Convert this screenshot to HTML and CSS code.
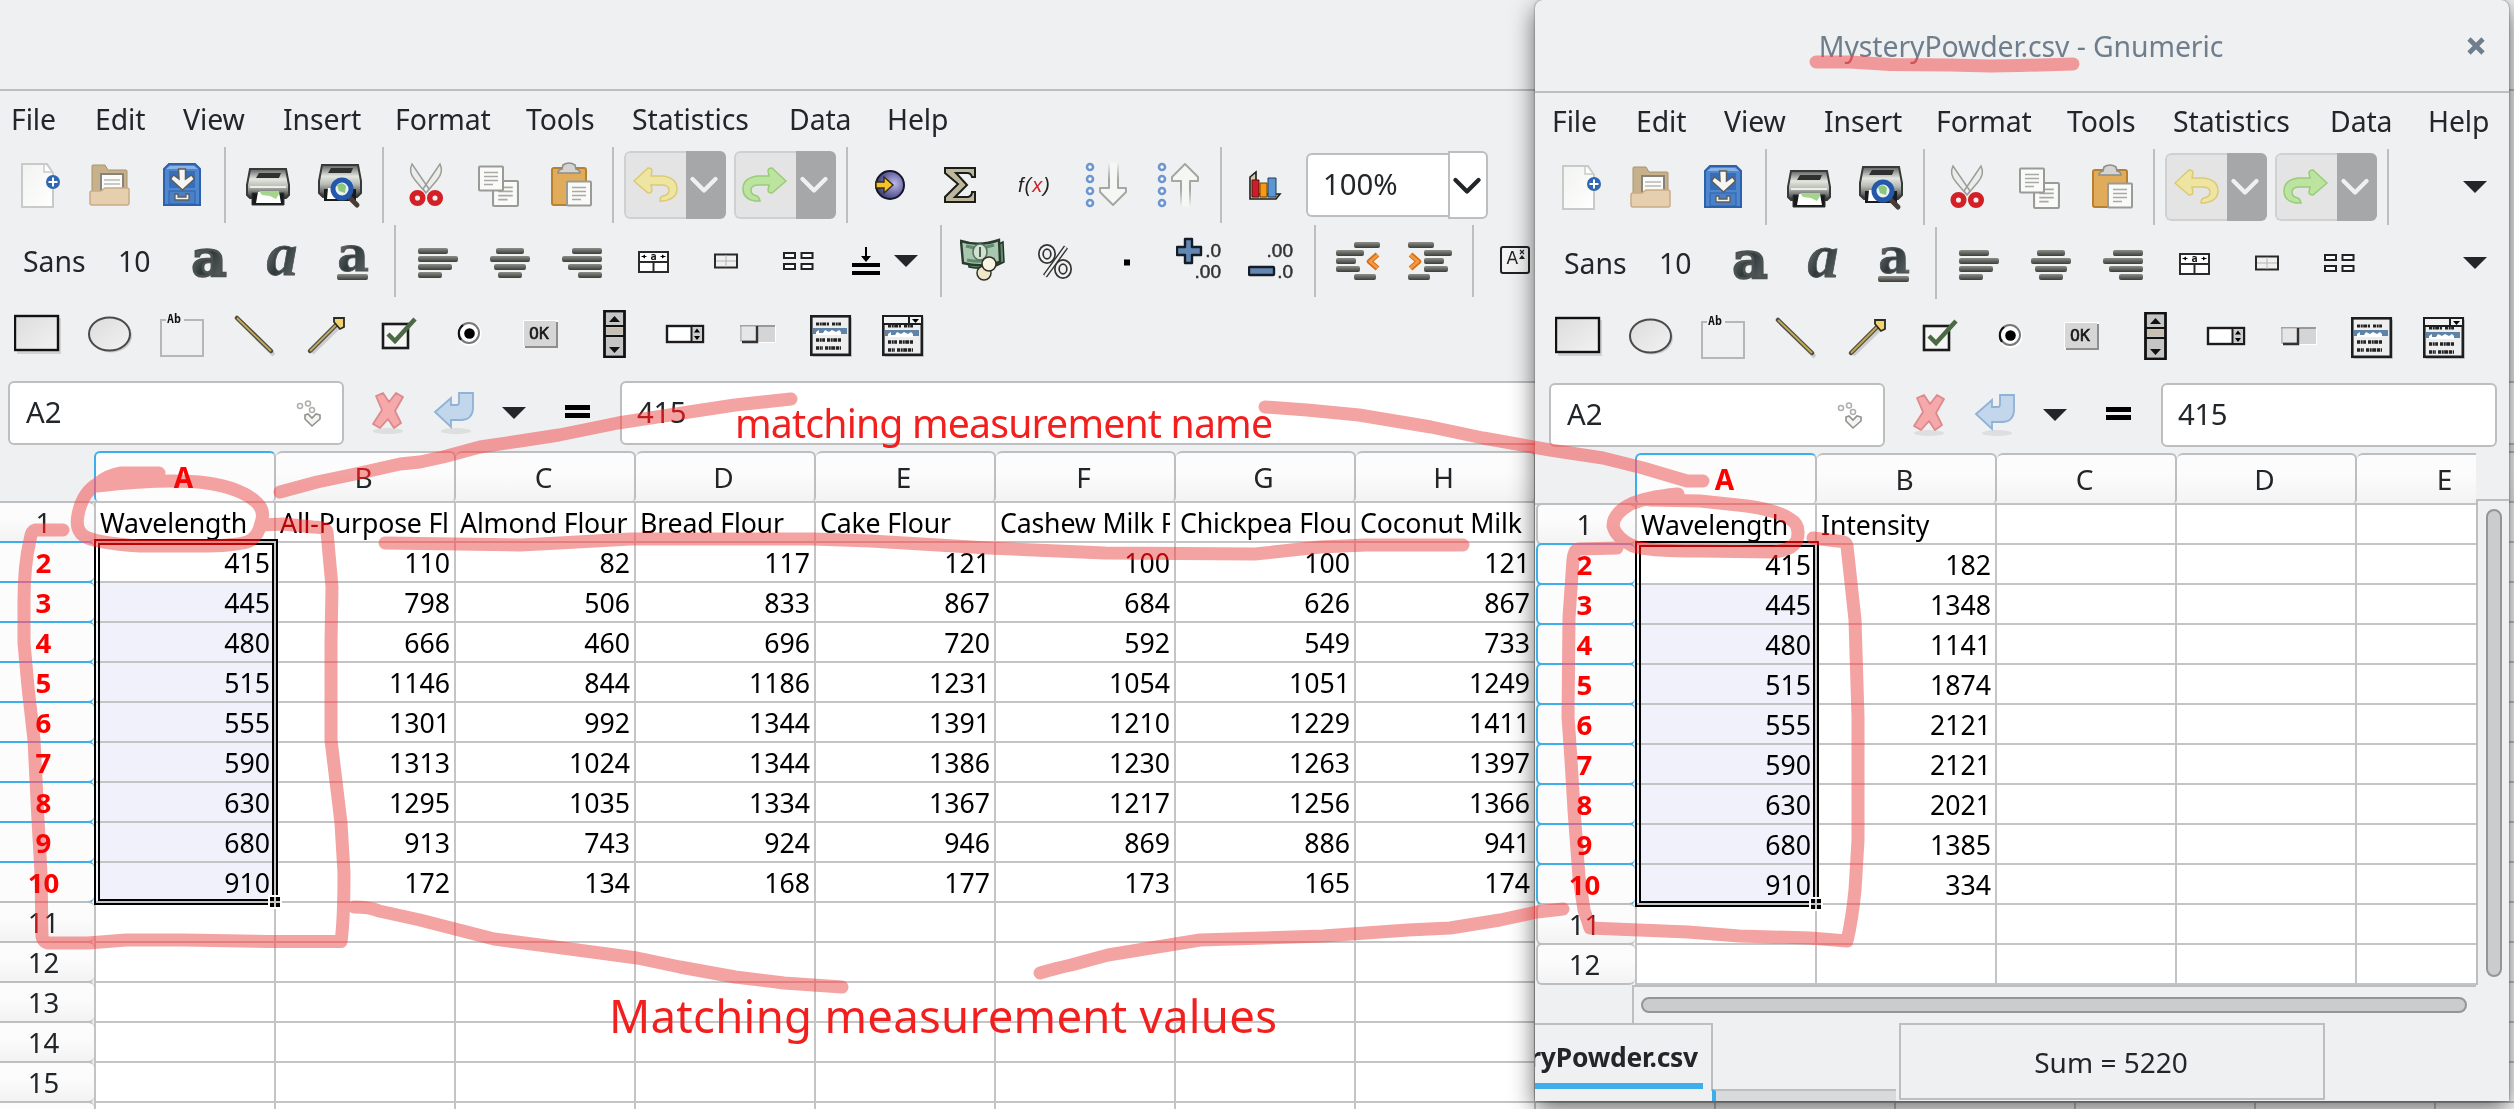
FILE: index.html
```html
<!DOCTYPE html>
<html lang="en">
<head>
<meta charset="utf-8">
<title>MysteryPowder.csv - Gnumeric</title>
<link rel="stylesheet" href="styles.css">
</head>
<body>
<svg class="defs" width="0" height="0" aria-hidden="true">
<defs>
<linearGradient id="bar" x1="0" y1="0" x2="0" y2="1"><stop offset="0" stop-color="#8d8e89"/><stop offset="1" stop-color="#3b3d39"/></linearGradient>
<linearGradient id="ink" x1="0" y1="0" x2="1" y2="1"><stop offset="0" stop-color="#909694"/><stop offset=".5" stop-color="#30393b"/><stop offset="1" stop-color="#6c7471"/></linearGradient>
<linearGradient id="paper" x1="0" y1="0" x2="1" y2="1"><stop offset="0" stop-color="#f2f2f1"/><stop offset="1" stop-color="#fff"/></linearGradient>
<linearGradient id="shade" x1="0" y1="0" x2="1" y2="1"><stop offset="0" stop-color="#dcdcdc"/><stop offset="1" stop-color="#f2f2f2"/></linearGradient>
<linearGradient id="metal" x1="0" y1="0" x2="0" y2="1"><stop offset="0" stop-color="#5d6260"/><stop offset=".35" stop-color="#e4e6e0"/><stop offset=".6" stop-color="#b9bbb6"/><stop offset="1" stop-color="#2d302f"/></linearGradient>
<radialGradient id="ball" cx=".65" cy=".45" r=".7"><stop offset="0" stop-color="#b9b9ea"/><stop offset="1" stop-color="#2c2c6c"/></radialGradient>
<linearGradient id="fadeup" x1="0" y1="0" x2="0" y2="1"><stop offset="0" stop-color="#a5a7a2" stop-opacity="0"/><stop offset=".4" stop-color="#a5a7a2"/></linearGradient>
<linearGradient id="fadedown" x1="0" y1="0" x2="0" y2="1"><stop offset=".6" stop-color="#a5a7a2"/><stop offset="1" stop-color="#a5a7a2" stop-opacity="0"/></linearGradient>

<symbol id="new" viewBox="0 0 48 48"><path d="M8 3H33L39 12V46H8z" fill="url(#paper)" stroke="#c9cac7" stroke-width="2"/><path d="M30 4v7h8" fill="#fff" stroke="#c9cac7" stroke-width="1.5"/><circle cx="39" cy="21" r="7" fill="#2f67b1"/><path d="M39 16.5v9M34.5 21h9" stroke="#fff" stroke-width="2"/></symbol>
<symbol id="open" viewBox="0 0 48 48"><path d="M6 42V5q0-1 1-1h12l3 5h18q1 0 1 1v30z" fill="#c6b18c" stroke="#a8946f"/><rect x="15" y="13" width="22" height="20" fill="#fbfbfa" stroke="#85837a" stroke-width="2"/><path d="M18 19h16M18 23h16" stroke="#b9b9b6" stroke-width="1.6"/><path d="M4 32q0-2 2-2h9l4-3h22q2 0 2 2v13q0 2-2 2H6q-2 0-2-2z" fill="#e6cfae" stroke="#c9ac86" stroke-width="1.5"/></symbol>
<symbol id="save" viewBox="0 0 48 48"><path d="M6 8l5-5h26l5 5v36H6z" fill="#4f86ce" stroke="#2c62ad" stroke-width="2"/><path d="M8 8l4-3h24l4 3z" fill="#8ab2e6"/><rect x="11" y="10" width="26" height="17" fill="#356fbc"/><rect x="11" y="30" width="26" height="13" fill="#4a80c8" stroke="#2c62ad"/><path d="M20.500 8h7v10l6-4 3 4-12 11-12-11 3-4 5.500 4z" fill="#f6f6f4" stroke="#5c5e5a" stroke-width="1.500"/><path d="M17 33v6h14v-6h-3v3h-8v-3z" fill="#f4f4f2" stroke="#5c5e5a" stroke-width="1.300"/></symbol>
<symbol id="print" viewBox="0 0 48 48"><path d="M6 8h36l3 16v10l-3 3H6l-3-3V24z" fill="url(#metal)" stroke="#363a39" stroke-width="2"/><path d="M15 12h22l-2 5H12z" fill="#2e3130"/><path d="M8 32h32v12H8z" fill="#191b1b" stroke="#333"/><path d="M6 26h36" stroke="#eceee9" stroke-width="2"/><path d="M14 31h21l2 11H12z" fill="#fff"/><path d="M15 30h20v3l-3 5-6-3-8-1z" fill="#a5d48c"/></symbol>
<symbol id="preview" viewBox="0 0 48 48"><path d="M6 4h36l3 16v12l-4 4H7l-4-4V20z" fill="url(#metal)" stroke="#363a39" stroke-width="2"/><path d="M15 7h22l-2 5H12z" fill="#2e3130"/><path d="M8 28h32v12H8z" fill="#191b1b"/><path d="M12 27h10v11H11z" fill="#fff"/><path d="M33 36l8 8" stroke="#463d36" stroke-width="5" stroke-linecap="round"/><circle cx="26" cy="28" r="9" fill="#e8f0f4" stroke="#2458aa" stroke-width="5"/><path d="M21 24q5-4 9 1l-1 7-6-2z" fill="#8cc67a"/></symbol>
<symbol id="cut" viewBox="0 0 48 48"><path d="M10 3q-4 8 3 16l11 13 3-4zM38 3q4 8-3 16L24 32l-3-4z" fill="#ecedea" stroke="#9b9d98" stroke-width="1.500"/><circle cx="15.500" cy="37" r="5.300" fill="#eee" stroke="#d32027" stroke-width="5.500"/><circle cx="33" cy="37" r="5.300" fill="#eee" stroke="#d32027" stroke-width="5.500"/></symbol>
<symbol id="sheet" viewBox="0 0 26 26"><rect x="1" y="1" width="24" height="24" rx="1" fill="#fafaf9" stroke="#999b96" stroke-width="2"/><path d="M6 7h14M6 11h14M6 15h14M6 19h9" stroke="#a9aaa6" stroke-width="1.700"/></symbol>
<symbol id="copy" viewBox="0 0 48 48"><use href="#sheet" x="18" y="19" width="27" height="27"/><use href="#sheet" x="4" y="4" width="26" height="27"/></symbol>
<symbol id="paste" viewBox="0 0 48 48"><rect x="6" y="7" width="34" height="37" rx="2" fill="#e0ab5b" stroke="#b9802f" stroke-width="2"/><path d="M17 4q6-4 12 0l1 4q4 1 4 4H12q0-3 4-4z" fill="#d4d5d2" stroke="#8d8f8b" stroke-width="1.600"/><use href="#sheet" x="20" y="19" width="26" height="27"/></symbol>
<symbol id="undo" viewBox="0 0 48 48"><path d="M3 20L17 7q4 0 4 3l-1 5h12q14 2 14 13 0 10-14 12h-3q0-4 3-5 6-1 6-6t-8-5H20l1 5q0 3-4 3z" fill="#efe5a3" stroke="#dcca72" stroke-width="1.500"/></symbol>
<symbol id="redo" viewBox="0 0 48 48"><path d="M45 20L31 7q-4 0-4 3l1 5H16Q2 17 2 28q0 10 12 12h5q-1-4-3-5-6-1-6-6t8-5h10l-1 5q0 3 4 3z" fill="#bde3a0" stroke="#97cd77" stroke-width="1.500"/></symbol>
<symbol id="globe" viewBox="0 0 48 48"><circle cx="24" cy="24" r="14" fill="url(#ball)" stroke="#15152c" stroke-width="2"/><path d="M10 21h8v-5l9 8-9 8v-5h-8z" fill="#f3c52a" stroke="#3a2c05" stroke-width="1.400"/></symbol>
<symbol id="sum" viewBox="0 0 48 48"><path d="M7 7h30v9h-3q-1-4-5-4H18l11 12-12 12h13q4-1 4-5h3v10H7v-5l13-13L7 12z" fill="#bdb89b" stroke="#1c1c18" stroke-width="2"/></symbol>
<symbol id="fx" viewBox="0 0 48 48"><text x="8" y="31" class="fx">f(<tspan fill="#d3202a">x</tspan>)</text></symbol>
<symbol id="dots" viewBox="0 0 48 48"><g fill="#fff" stroke="#6d96cf" stroke-width="2.600"><circle cx="8" cy="6" r="3"/><circle cx="8" cy="18" r="3"/><circle cx="8" cy="30" r="3"/><circle cx="8" cy="42" r="3"/></g></symbol>
<symbol id="sortdown" viewBox="0 0 48 48"><use href="#dots"/><path d="M27 1h9v26h8v4L31 44 18 31v-4h9z" fill="#f6f6f4" stroke="url(#fadeup)" stroke-width="2" stroke-linejoin="round"/></symbol>
<symbol id="sortup" viewBox="0 0 48 48"><use href="#dots"/><path d="M27 46h9V20h8v-4L31 3 18 16v4h9z" fill="#f6f6f4" stroke="url(#fadedown)" stroke-width="2" stroke-linejoin="round"/></symbol>
<symbol id="chart" viewBox="0 0 48 48"><path d="M10 38V16l6-5v22h24l-4 5z" fill="#cfcaaa" stroke="#1f1f1c" stroke-width="1.600"/><path d="M12 19h7v17h-7z" fill="#cb1f27" stroke="#5a1013"/><path d="M20 22h7v14h-7z" fill="#f79a12" stroke="#66420a"/><path d="M28 17h8v19h-8z" fill="#5d97d2" stroke="#1c3c5e"/></symbol>
<symbol id="bold" viewBox="0 0 48 48"><text x="25" y="38.500" textLength="35" lengthAdjust="spacingAndGlyphs" class="glyph heavy" font-size="51">a</text></symbol>
<symbol id="italic" viewBox="0 0 48 48"><text x="26" y="38" class="glyph slant">a</text></symbol>
<symbol id="underline" viewBox="0 0 48 48"><text x="25" y="34" class="glyph" font-size="49">a</text><rect x="9" y="37" width="31" height="6" rx="2" fill="url(#bar)"/></symbol>
<symbol id="left" viewBox="0 0 48 48"><g fill="url(#bar)"><rect x="4" y="11" width="30" height="6" rx="2"/><rect x="4" y="19" width="40" height="6" rx="2"/><rect x="4" y="27" width="34" height="6" rx="2"/><rect x="4" y="35" width="24" height="6" rx="2"/></g></symbol>
<symbol id="center" viewBox="0 0 48 48"><g fill="url(#bar)"><rect x="10" y="11" width="28" height="6" rx="2"/><rect x="4" y="19" width="40" height="6" rx="2"/><rect x="8" y="27" width="32" height="6" rx="2"/><rect x="12" y="35" width="24" height="6" rx="2"/></g></symbol>
<symbol id="right" viewBox="0 0 48 48"><g fill="url(#bar)"><rect x="14" y="11" width="30" height="6" rx="2"/><rect x="4" y="19" width="40" height="6" rx="2"/><rect x="10" y="27" width="34" height="6" rx="2"/><rect x="20" y="35" width="24" height="6" rx="2"/></g></symbol>
<symbol id="merge" viewBox="0 0 48 48"><path d="M9 15h29v20H9zM9 25h29M23.500 25v10" fill="#fdfdfd" stroke="#2a2a2a" stroke-width="2"/><path d="M11.500 19.500h5M30.500 19.500h5" stroke="#111" stroke-width="1.200"/><path d="M15 17.500l-3 2 3 2zM32 17.500l3 2-3 2z"/><text x="20.500" y="23" font-size="10" class="tiny">a</text></symbol>
<symbol id="split" viewBox="0 0 48 48"><rect x="13" y="17.500" width="22" height="13" fill="#f0f0f0" stroke="#2a2a2a" stroke-width="2"/><path d="M24 18v12M14 24h20" stroke="#b5b5b5"/></symbol>
<symbol id="quad" viewBox="0 0 48 48"><path d="M10 16h11v5H10zM27.500 16h11v5h-11zM10 27h11v5H10zM27.500 27h11v5h-11z" fill="#fcfcfc" stroke="#222" stroke-width="2"/></symbol>
<symbol id="valign" viewBox="0 0 48 48"><path d="M10 26h28v4H10zM10 34h28v4H10zM23 10h2v9h4l-5 6-5-6h4z"/></symbol>
<symbol id="money" viewBox="0 0 48 48"><path d="M7 9q17 7 36-4l1 20q-16 9-35 5z" fill="#5d8f6c" stroke="#26332a" stroke-width="1.500"/><path d="M1 4q18 6 38-1l1 22q-18 6-37 1z" fill="#a9c7b0" stroke="#2a3a2f" stroke-width="2.400"/><path d="M6 9q14 4 28-1M7 23q14 3 28-1" fill="none" stroke="#5f8a6b" stroke-width="3"/><ellipse cx="20" cy="15" rx="7" ry="8" fill="#d3e0d4" stroke="#56755f" stroke-width="1.600"/><path d="M20 10v10" stroke="#48664f" stroke-width="2"/><circle cx="24" cy="36" r="7" fill="#eee8cb" stroke="#2f2e28" stroke-width="1.500"/><circle cx="29" cy="27" r="7" fill="#f7f4e2" stroke="#2f2e28" stroke-width="1.500"/></symbol>
<symbol id="percent" viewBox="0 0 48 48"><g fill="none" stroke="#333" stroke-width="6"><ellipse cx="15" cy="17" rx="6" ry="7"/><ellipse cx="31" cy="32" rx="6" ry="7"/><path d="M34 10L13 39" stroke-width="5"/></g><g fill="none" stroke="#f2f2f2" stroke-width="2.600"><ellipse cx="15" cy="17" rx="6" ry="7"/><ellipse cx="31" cy="32" rx="6" ry="7"/><path d="M34 10L13 39" stroke-width="2.200"/></g></symbol>
<symbol id="dot" viewBox="0 0 48 48"><rect x="20" y="22.500" width="6" height="6" fill="#000"/></symbol>
<symbol id="moredec" viewBox="0 0 48 48"><path d="M9 2h7v8h9v8h-9v8H9v-8H1v-8h8z" fill="#6287b5" stroke="#161c26" stroke-width="2.400" stroke-linejoin="round"/><text x="45" y="20" class="dec">.0</text><text x="45" y="41" class="dec">.00</text></symbol>
<symbol id="lessdec" viewBox="0 0 48 48"><text x="45" y="20" class="dec">.00</text><text x="45" y="41" class="dec">.0</text><rect x="1" y="30" width="25" height="8" rx="1" fill="#6287b5" stroke="#161c26" stroke-width="2.400"/></symbol>
<symbol id="outdent" viewBox="0 0 48 48"><g fill="url(#bar)"><rect x="20" y="5" width="26" height="6" rx="2"/><rect x="2" y="13" width="28" height="6" rx="2"/><rect x="2" y="21" width="20" height="6" rx="2"/><rect x="2" y="29" width="24" height="6" rx="2"/><rect x="20" y="37" width="22" height="6" rx="2"/></g><path d="M43.500 17.500L35.500 24.500l8 7" fill="none" stroke="#d96f12" stroke-width="5.500" stroke-linejoin="round"/><path d="M43.500 18L36 24.500l7.500 6.500" fill="none" stroke="#f19a47" stroke-width="2.500"/></symbol>
<symbol id="indent" viewBox="0 0 48 48"><g fill="url(#bar)"><rect x="2" y="5" width="26" height="6" rx="2"/><rect x="18" y="13" width="28" height="6" rx="2"/><rect x="18" y="21" width="20" height="6" rx="2"/><rect x="18" y="29" width="24" height="6" rx="2"/><rect x="2" y="37" width="22" height="6" rx="2"/></g><path d="M4.500 17.500l8 7-8 7" fill="none" stroke="#d96f12" stroke-width="5.500" stroke-linejoin="round"/><path d="M4.500 18l7.500 6.500L4.500 31" fill="none" stroke="#f19a47" stroke-width="2.500"/></symbol>
<symbol id="super" viewBox="0 0 48 48"><rect x="9" y="10" width="28" height="26" rx="2" fill="#f4f4f4" stroke="#222" stroke-width="2"/><text x="14.500" y="27" font-size="17" class="cap">A</text><path d="M28 13l4 4M32 13l-4 4" stroke="#222" stroke-width="1.200"/><path d="M27 22l3-4 3 4z" fill="#222"/></symbol>
<symbol id="rect" viewBox="0 0 48 48"><rect x="3" y="8" width="44" height="36" fill="#000" opacity=".12"/><rect x="1" y="6" width="43" height="34" fill="url(#shade)" stroke="#111" stroke-width="2.400"/></symbol>
<symbol id="oval" viewBox="0 0 48 48"><ellipse cx="25" cy="26" rx="21" ry="16.500" fill="#000" opacity=".15"/><ellipse cx="23.500" cy="24" rx="20.500" ry="16.500" fill="url(#shade)" stroke="#4a4a4a" stroke-width="2"/></symbol>
<symbol id="frame" viewBox="0 0 48 48"><path d="M8 10H3v36h42V10H26" fill="none" stroke="#b6b7b6" stroke-width="2"/><text x="9" y="13" class="ab">Ab</text></symbol>
<symbol id="line" viewBox="0 0 48 48"><path d="M10 11l34 34" stroke="#000" stroke-opacity=".15" stroke-width="4"/><path d="M7 8l34 33" stroke="#4e4c42" stroke-width="4.500" stroke-linecap="round"/><path d="M7 8l34 33" stroke="#c3ac58" stroke-width="1.800"/></symbol>
<symbol id="arrow" viewBox="0 0 48 48"><path d="M10 43l27-26" stroke="#000" stroke-opacity=".15" stroke-width="4"/><path d="M8 41l28-28" stroke="#4e4c42" stroke-width="4.500" stroke-linecap="round"/><path d="M8 41l28-28" stroke="#c3ac58" stroke-width="1.800"/><path d="M32 8h10v9l-4 2-6-7z" fill="#f0d470" stroke="#2d2a1e" stroke-width="1.800"/></symbol>
<symbol id="check" viewBox="0 0 48 48"><rect x="9" y="14" width="25" height="24" fill="#f6f6f6" stroke="#1b1b1b" stroke-width="2.600"/><path d="M14 24l7 7L41 9" fill="none" stroke="#4b6a44" stroke-width="4.500"/></symbol>
<symbol id="radio" viewBox="0 0 48 48"><circle cx="23.500" cy="24" r="12" fill="#fff"/><circle cx="23" cy="23" r="10" fill="#fff" stroke="#777" stroke-width="2"/><path d="M15 30a10.500 10.500 0 0 1 2-15" fill="none" stroke="#111" stroke-width="2"/><circle cx="23.500" cy="23.500" r="5.300"/></symbol>
<symbol id="ok" viewBox="0 0 48 48"><path d="M5 10h35v27H5z" fill="#fff"/><path d="M7 12h33v26H7z" fill="#8e8e8e"/><path d="M6 11h32v25H6z" fill="#d6d6d6"/><text x="11" y="29" class="ok">OK</text></symbol>
<symbol id="scroll" viewBox="0 0 48 48"><rect x="14.500" y="1" width="20" height="46" fill="#c5c5c5" stroke="#111" stroke-width="2.800"/><path d="M14 16h21M14 26h21" stroke="#111" stroke-width="2"/><rect x="16.500" y="18" width="16" height="6" fill="#c6bfb2"/><path d="M19 12l5.500-6 5.500 6zM19 37l5.500 6 5.500-6z" fill="#111"/></symbol>
<symbol id="spin" viewBox="0 0 48 48"><rect x="5" y="16" width="36" height="16" fill="#fff" stroke="#1b1b1b" stroke-width="2.400"/><rect x="30" y="17" width="10" height="14" fill="#ccc"/><path d="M29.500 16v16" stroke="#1b1b1b" stroke-width="2"/><path d="M32 22.500l3-4 3 4zM32 26l3 4 3-4z"/></symbol>
<symbol id="slider" viewBox="0 0 48 48"><path d="M6 16h36v17H6z" fill="#fff"/><path d="M6 15h35v17H6z" fill="#d5d5d5"/><path d="M6 16h35" stroke="#999" stroke-width="2"/><rect x="7" y="16" width="16" height="15" fill="#e6e6e6" stroke="#aaa"/><path d="M8 32h15V16" fill="none" stroke="#333" stroke-width="2.400"/></symbol>
<symbol id="lines" viewBox="0 0 48 48"><path d="M7 18h34v6H7z" fill="#5f83a6"/><path d="M10 22l3-2v3h4l2-3 4 2 3-2 4 2 3-2 2 2v3H10z" fill="#fff"/><g fill="none" stroke="#222" stroke-width="3.600" stroke-dasharray="3 .7 2 .5 4 .8"><path d="M10 14h13M26 14h9" stroke-width="2.800"/><path d="M10 30h9M21 30h14"/><path d="M10 38h7M19 38h16"/></g></symbol>
<symbol id="list" viewBox="0 0 48 48"><path d="M7 8h39v39H7z" opacity=".15"/><rect x="5.300" y="6.300" width="38.500" height="38.500" fill="#eee" stroke="#1b1f20" stroke-width="2.600"/><use href="#lines"/></symbol>
<symbol id="combo" viewBox="0 0 48 48"><path d="M7 8h39v39H7z" opacity=".15"/><rect x="5.300" y="6.300" width="38.500" height="38.500" fill="#eee" stroke="#1b1f20" stroke-width="2.600"/><use href="#lines" y="2"/><path d="M6 7h37v7H6z" fill="#f3f3f3"/><path d="M5 14h39M31 6v8" stroke="#1b1f20" stroke-width="2"/><path d="M34 9h7l-3.500 4z"/></symbol>
<symbol id="goto" viewBox="0 0 48 48"><g fill="#fff" stroke="#b0b0ae" stroke-width="1.600"><circle cx="13" cy="17" r="2.500"/><circle cx="21" cy="14.500" r="2.500"/><circle cx="25" cy="21" r="2.500"/></g><path d="M18 26l3-1 4 4 4-4 4 1v4l-8 7-7-7z" fill="#f4f4f3" stroke="#90928e" stroke-width="1.600"/></symbol>
<symbol id="cancel" viewBox="0 0 48 48"><ellipse cx="24" cy="43" rx="15" ry="3" fill="#ccc" opacity=".5"/><path d="M12 8l7-3 6 9 7-9 7 4-8 14 6 12-7 5-6-9-8 9-7-4 9-14z" fill="#f5a9ab" stroke="#dd8a8c" stroke-width="1.800" stroke-linejoin="round"/></symbol>
<symbol id="enter" viewBox="0 0 48 48"><ellipse cx="26" cy="43" rx="15" ry="3" fill="#ccc" opacity=".5"/><path d="M5 24L21 10v7h6q2 0 2-3V5h14v16q-1 11-12 11H21v7z" fill="#c3d7ec" stroke="#8fb2d6" stroke-width="1.800"/></symbol>
<symbol id="equal" viewBox="0 0 48 48"><path d="M12 17h25v5H12zM12 25h25v5H12z"/></symbol>
<symbol id="caret" viewBox="0 0 24 12"><path d="M0 0h24L12 12z" fill="#232629"/></symbol>
<symbol id="chevron" viewBox="0 0 28 18"><path d="M2.500 3L14 14.500 25.500 3" fill="none" stroke="currentColor" stroke-width="4.200" stroke-linecap="round" stroke-linejoin="round"/></symbol>
<symbol id="close" viewBox="0 0 18 18"><path d="M2 2l14 14M16 2L2 16" stroke="#6f7e8c" stroke-width="4.600"/></symbol>

<g id="strokes" fill="none" stroke-width="13" stroke-linecap="round" stroke-linejoin="round">
<path d="M1816 62L1850 62 1890 64.500 1950 65 1990 66 2020 65.500 2073 64"/>
<path d="M159 473H121Q108 475 97 484 82 493 78 515 75 530 84 536 95 543 140 546H200Q232 546 247 542 258 538 261 523 266 510 255 501 240 488 207 483 167 478 97 486"/>
<path d="M63 530H35Q31 531 30 540 24 565 24 600V643L28 687 34 740 38 820 41 873 42 936Q43 943 50 943H88L126 940H184L268 941.500H341Q344 920 344 873L341 823 331 740V643L332 587 327 532Q326 527 313 527L283 524 262 525"/>
<path d="M280 492L317 482 360 473 400 464 420 462 443 457 480 447 520 441 559 435 618 423 689 412 735 405 791 399"/>
<path d="M1265 407L1307 410 1359 415 1431 427 1483 438 1550 450 1603 458 1643 468 1687 481H1703"/>
<path d="M385 543L520 545 559 543 631 539H813L871 541 988 548 1105 553 1255 554 1320 547 1366 545H1463"/>
<path d="M1678 494Q1645 497 1629 505 1613 514 1613 526 1616 538 1633 546 1645 551 1700 551L1773 552Q1793 550 1797 540 1801 525 1790 519 1780 511 1747 506L1700 501 1650 500"/>
<path d="M1617 548L1578 549Q1574 550 1573 560L1569 617 1568 717 1571 760 1574 810 1579 877 1584 910 1590 928 1688 932 1739 936 1810 938 1847 941Q1852 920 1855 890L1858 840V717L1855 620 1847 546Q1846 541 1837 541L1813 538"/>
<path d="M354 907Q370 907 379 911L420 920 494 939 555 947 600 953 637 958 680 967 735 977 784 983 842 987"/>
<path d="M1040 973Q1057 968 1071 965L1108 955 1200 940 1323 936 1408 930 1450 928 1500 920 1537 912 1563 909"/>
</g>
</defs>
</svg>

<div class="desktop">
  <section class="window back" id="samples"></section>
  <section class="window front" id="mystery"></section>
  <svg class="ink lighten" width="2514" height="1109"><use href="#strokes"/></svg>
  <svg class="ink tint" width="2514" height="1109"><use href="#strokes"/></svg>
  <svg class="notes" width="2514" height="1109">
    <text x="735" y="438" font-size="39.200" textLength="538">matching measurement name</text>
    <text x="609" y="1033" font-size="45.500" textLength="668">Matching measurement values</text>
  </svg>
</div>
<script src="script.js"></script>
</body>
</html>
```
FILE: styles.css
```css
* { box-sizing: border-box; }
body { margin: 0; font-family: "Noto Sans", "Open Sans", sans-serif; font-size: 29.33px; color: #232629; }
.defs { display: block; position: absolute; }
.desktop { position: relative; width: 2514px; height: 1109px; overflow: hidden; background: #eff0f1; }
.window { position: absolute; display: flex; flex-direction: column; background: #eff0f1; overflow: hidden; }
.back { left: -6px; top: -2px; width: 2600px; height: 1200px; }
.front { left: 1535px; top: 0; width: 974px; height: 1101px; border-radius: 8px 8px 0 0; box-shadow: 0 0 2px rgba(0,0,0,.5), 0 8px 24px rgba(0,0,0,.6); }

.titlebar { height: 93px; flex: none; border-bottom: 2px solid #bcbebf; display: grid; grid-template-columns: 1fr 18px; align-items: center; padding: 0 24px 0 40px; color: #6f7e8c; text-align: center; font-size: 28.4px; letter-spacing: -.1px; }
.titlebar svg { width: 18px; height: 18px; }
.back .titlebar > * { visibility: hidden; }
.menu { height: 55px; flex: none; display: grid; grid-template-columns: 84px 88px 100px 112px 131px 106px 157px 98px 90px; padding: 8px 0 0 17px; line-height: 40px; font-size: 28.4px; letter-spacing: -.1px; }

.toolbar { flex: none; display: flex; align-items: center; padding-left: 8px; }
.tb1 { height: 78px; }
.tb2 { height: 74px; }
.tb3 { height: 72px; }
.icon { width: 72px; height: 48px; padding: 0 12px; flex: none; }
.sep { width: 14px; flex: none; height: 76px; background: linear-gradient(#bcbebf, #bcbebf) center / 2px 100% no-repeat; }
.tb2 .sep { height: 72px; }
.caret { width: 24px; height: 12px; flex: none; }
.overflow { margin-left: auto; margin-right: 22px; }
.history { display: flex; width: 102px; height: 68px; flex: none; margin: 0 4px; border-radius: 6px; overflow: hidden; color: #eff0f1; }
.history .pic { width: 62px; border: 2px solid #cfd0d1; border-right: 0; border-radius: 6px 0 0 6px; background: #e4e4e4; padding: 8px 5px; }
.history .pic svg { width: 48px; height: 48px; display: block; }
.history .drop { width: 40px; background: #a6a7a9; padding: 25px 4px 0; }
.chev { width: 28px; height: 18px; display: block; }
.zoom { display: flex; align-items: center; margin-left: 6px; flex: none; }
.zoom span { width: 142px; height: 64px; border: 2px solid #bcbebf; border-right: 0; border-radius: 6px 0 0 6px; background: #fff; line-height: 59px; padding-left: 15px; }
.zoom i { width: 40px; height: 68px; border: 2px solid #bcbebf; border-radius: 0 6px 6px 0; background: #fff; padding: 24px 0 0 3px; }
.font { width: 170px; flex: none; display: grid; grid-template-columns: 95px 1fr; padding-left: 21px; font-size: 28.4px; }
.halign { width: 100px; flex: none; display: flex; align-items: center; }
.halign .icon { width: 60px; padding: 0 0 0 4px; margin-right: 0; }

.formula { height: 81px; flex: none; display: flex; align-items: flex-start; padding: 11px 12px 0 14px; }
.formula .entry { height: 64px; border: 2px solid #bcbebf; border-radius: 6px; background: #fff; line-height: 59px; padding-left: 16px; }
.formula .content { padding-left: 15px; letter-spacing: -.4px; }
.name { width: 336px; display: flex; justify-content: space-between; }
.name svg { width: 48px; height: 48px; margin: 6px 7px; }
.content { flex: 1; }
.formula .btn { width: 48px; height: 48px; margin-top: 7px; flex: none; }
.formula .cancel { margin: 7px 18px 0 20px; }
.formula .caret { margin: 26px 28px 0 24px; }
.formula .equal { margin: 7px 19px 0 -1px; }

.area { display: flex; flex: none; }
.sheet { position: relative; overflow: hidden; flex: none; }
.front .sheet { width: 941px; height: 532px; border-bottom: 0; }
.heads { display: flex; height: 52px; border-bottom: 2px solid #c2c3c3; padding-left: 102px; width: max-content; }
.head { width: 180px; height: 50px; border: 2px solid #bcbebf; border-left: 0; border-bottom: 0; border-radius: 6px 6px 4px 4px; background: linear-gradient(#fcfcfc 40%, #f3f3f4); text-align: center; font-size: 28px; line-height: 48px; padding-right: 3px; }
.head.on { width: 182px; margin-left: -2px; border-left: 2px solid #3daee9; border-top-color: #3daee9; background: #fcfcfc; color: #f00; font-weight: 700; }
.row { display: flex; height: 40px; width: max-content; font-size: 26.67px; line-height: 39px; color: #000; background: #fff; }
.rowhead { width: 102px; padding-left: 1px; border-right: 2px solid #c2c3c3; background: #eff0f1; }
.rowhead b { display: block; position: relative; height: 42px; margin-top: -2px; border: 2px solid #bcbebf; border-right: 0; border-radius: 6px; background: linear-gradient(#fcfcfc 40%, #f3f3f4); text-align: center; font-weight: 400; font-size: 27.6px; line-height: 39px; padding-right: 4px; color: #232629; }
.rowhead.on b { border-color: #3daee9; background: #fcfcfc; color: #f00; font-weight: 700; }
.cell { width: 180px; border: 0 solid #c4c4c4; border-width: 0 2px 2px 0; padding: 0 4px; }
.cell span { display: block; overflow: hidden; white-space: nowrap; height: 38px; letter-spacing: -.15px; }
.cell.num { text-align: right; }
.cell.num span { letter-spacing: 0; }
.cell.sel { background: #f1f1fc; }
.cursor { position: absolute; left: 100px; top: 88px; width: 184px; height: 366px; border: 6px double #000; }
.handle { position: absolute; left: 274px; top: 444px; width: 14px; height: 14px; border: 2px solid #fff; background: linear-gradient(#c4c4c4, #c4c4c4) center / 2px 100% no-repeat, linear-gradient(#c4c4c4, #c4c4c4) center / 100% 2px no-repeat, #000; }

.vscroll { width: 33px; height: 486px; margin-top: 46px; border: 2px solid #bcbebf; border-width: 2px 0 0 2px; padding: 8px 8px 0; }
.vscroll i { display: block; width: 16px; height: 468px; margin-top: 0; }
.thumb { border: 2px solid #939597; background: #cbcccd; border-radius: 8px; }
.front .area { height: 532px; }
.hscroll { flex: none; height: 38px; width: 844px; margin-left: 97px; border: 2px solid #bcbebf; border-width: 2px 0 0 2px; padding: 10px 0 0 7px; }
.hscroll i { display: block; width: 826px; height: 16px; }
.status { flex: 1; display: flex; font-size: 28px; }
.tab { width: 178px; height: 68px; border: 2px solid #bcbebf; border-width: 2px 2px 0 0; display: flex; flex-direction: column; align-items: flex-end; font-size: 26.4px; font-weight: 700; overflow: hidden; }
.tab span { height: 58px; flex: none; line-height: 64px; padding-right: 13px; white-space: nowrap; letter-spacing: -.2px; }
.tab i { width: 168px; height: 6px; margin-right: 8px; background: #3daee9; }
.hint { align-self: flex-end; width: 184px; height: 12px; margin: 0 3px 0 -1px; border-top: 2px solid #bcbebf; border-left: 4px solid #3daee9; background: #d9dadc; }
.sum { width: 426px; height: 77px; border: 2px solid #bcbebf; text-align: center; line-height: 75px; font-size: 28px; padding-right: 2px; }

.ink { position: absolute; left: 0; top: 0; pointer-events: none; }
.lighten { stroke: #be0808; mix-blend-mode: screen; }
.tint { stroke: #f4a3a3; mix-blend-mode: multiply; }
.notes { position: absolute; left: 0; top: 0; fill: #f21f1f; }

.glyph { font-family: "DejaVu Serif", serif; font-weight: 700; text-anchor: middle; fill: url(#ink); stroke: #4b5250; stroke-width: .8px; }
.heavy { stroke-width: 2.5px; }
.slant { font-family: "Liberation Serif", serif; font-style: italic; font-size: 62px; }
.fx { font-family: "Liberation Sans", sans-serif; font-style: italic; font-size: 20px; fill: #222; letter-spacing: 1px; }
.dec { font-family: "Liberation Sans", sans-serif; font-size: 19px; text-anchor: end; fill: #333; stroke: #333; stroke-width: .5px; }
.tiny, .ok, .ab { font-family: "DejaVu Sans Mono", monospace; font-weight: 700; fill: #111; }
.ab { font-size: 11.5px; }
.ok { font-size: 16.5px; font-weight: 400; stroke: #222; stroke-width: .6px; }
.cap { font-family: "DejaVu Sans", sans-serif; fill: #222; }
```
FILE: script.js
```js
const svg = (id, cls = "icon") => `<svg class="${cls}"><use href="#${id}"/></svg>`;
const history = id => `<div class="history"><div class="pic"><svg><use href="#${id}"/></svg></div><div class="drop">${svg("chevron", "chev")}</div></div>`;
const pieces = {
  "|": '<i class="sep"></i>',
  undo: history("undo"),
  redo: history("redo"),
  zoom: `<div class="zoom"><span>100%</span><i>${svg("chevron", "chev")}</i></div>`,
  font: '<div class="font"><span>Sans</span><span>10</span></div>',
  halign: `<div class="halign">${svg("valign")}${svg("caret", "caret")}</div>`,
  more: svg("caret", "caret overflow")
};
const bar = (cls, items) => `<div class="toolbar ${cls}">${items.split(" ").map(i => pieces[i] || svg(i)).join("")}</div>`;

const menus = ["File", "Edit", "View", "Insert", "Format", "Tools", "Statistics", "Data", "Help"];
const standard = "new open save | print preview | cut copy paste | undo redo |";
const format = "font bold italic underline | left center right merge split quad";
const objects = "rect oval frame line arrow check radio ok scroll spin slider list combo";

function sheet(cols, rows, data) {
  let out = '<div class="sheet"><div class="heads">';
  for (let c = 0; c < cols; c++) out += `<div class="head${c ? "" : " on"}">${String.fromCharCode(65 + c)}</div>`;
  out += "</div>";
  for (let r = 0; r < rows; r++) {
    const on = r > 0 && r < 10;
    out += `<div class="row"><div class="rowhead${on ? " on" : ""}"><b>${r + 1}</b></div>`;
    for (let c = 0; c < cols; c++) {
      const v = (data[c] || [])[r] ?? "";
      const cls = (typeof v === "number" ? " num" : "") + (c === 0 && r > 1 && r < 10 ? " sel" : "");
      out += `<div class="cell${cls}"><span>${v}</span></div>`;
    }
    out += "</div>";
  }
  return out + '<div class="cursor"></div><div class="handle"></div></div>';
}

function windowBody(tb1, tb2, table) {
  return `<div class="titlebar"><span>MysteryPowder.csv - Gnumeric</span>${svg("close", "x")}</div>
    <nav class="menu">${menus.map(m => `<span>${m}</span>`).join("")}</nav>
    ${bar("tb1", tb1)}${bar("tb2", tb2)}${bar("tb3", objects)}
    <div class="formula"><div class="entry name"><span>A2</span>${svg("goto", "")}</div>
    ${svg("cancel", "btn cancel")}${svg("enter", "btn")}${svg("caret", "caret")}${svg("equal", "btn equal")}
    <div class="entry content">415</div></div>${table}`;
}

const wavelengths = ["Wavelength", 415, 445, 480, 515, 555, 590, 630, 680, 910];
document.getElementById("samples").innerHTML = windowBody(
  `${standard} globe sum fx sortdown sortup | chart zoom`,
  `${format} halign | money percent dot moredec lessdec | outdent indent | super`,
  `<div class="area">${sheet(14, 16, [
    wavelengths,
    ["All-Purpose Flo", 110, 798, 666, 1146, 1301, 1313, 1295, 913, 172],
    ["Almond Flour", 82, 506, 460, 844, 992, 1024, 1035, 743, 134],
    ["Bread Flour", 117, 833, 696, 1186, 1344, 1344, 1334, 924, 168],
    ["Cake Flour", 121, 867, 720, 1231, 1391, 1386, 1367, 946, 177],
    ["Cashew Milk P", 100, 684, 592, 1054, 1210, 1230, 1217, 869, 173],
    ["Chickpea Flou", 100, 626, 549, 1051, 1229, 1263, 1256, 886, 165],
    ["Coconut Milk P", 121, 867, 733, 1249, 1411, 1397, 1366, 941, 174]
  ])}</div>`);
document.getElementById("mystery").innerHTML = windowBody(
  `${standard} more`,
  `${format} more`,
  `<div class="area">${sheet(6, 12, [
    wavelengths,
    ["Intensity", 182, 1348, 1141, 1874, 2121, 2121, 2021, 1385, 334]
  ])}<div class="vscroll"><i class="thumb"></i></div></div>
  <div class="hscroll"><i class="thumb"></i></div>
  <div class="status"><div class="tab"><span>MysteryPowder.csv</span><i></i></div><div class="hint"></div><div class="sum">Sum = 5220</div></div>`);
```
